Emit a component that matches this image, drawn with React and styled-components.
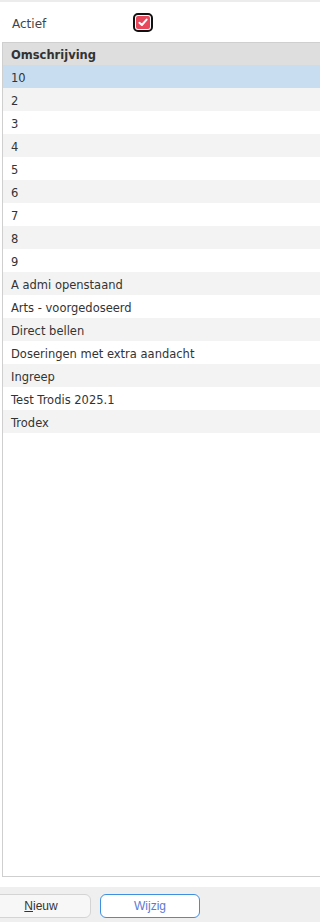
import React from "react";
import styled, { createGlobalStyle } from "styled-components";

const Global = createGlobalStyle`
  html, body { margin: 0; padding: 0; background: #fff; }
  body { overflow: hidden; font-family: "DejaVu Sans", Verdana, sans-serif; }
`;

const Page = styled.div`
  display: flex;
  flex-direction: column;
  height: 922px;
  width: 100%;
  overflow: hidden;
`;

const TopStrip = styled.div`
  height: 2px;
  background: #ececec;
  flex: none;
`;

const FilterRow = styled.div`
  display: grid;
  grid-template-columns: 121px auto;
  align-items: center;
  height: 40px;
  padding-left: 12px;
  flex: none;
`;

const Label = styled.span`
  font-size: 12px;
  color: #444;
  padding-top: 3px;
`;

const CheckBox = styled.span`
  box-sizing: border-box;
  width: 20px;
  height: 19px;
  border: 2px solid #111;
  border-radius: 5px;
  padding: 1px;
  display: inline-flex;
  margin-top: 1px;
`;

const CheckFill = styled.span`
  flex: 1;
  background: #e8485b;
  border-radius: 2px;
  display: flex;
  align-items: center;
  justify-content: center;
`;

const Table = styled.div`
  flex: 1;
  margin-left: 2px;
  border: 1px solid #cfcfcf;
  border-right: none;
  display: flex;
  flex-direction: column;
  min-height: 0;
`;

const HeaderCell = styled.div`
  height: 22px;
  box-sizing: border-box;
  background: #dedede;
  font-weight: bold;
  font-size: 11.5px;
  color: #333;
  display: flex;
  align-items: center;
  padding: 2px 0 0 8px;
`;

const Row = styled.div`
  height: 23px;
  box-sizing: border-box;
  display: flex;
  align-items: center;
  padding: 3px 0 0 8px;
  font-size: 11.5px;
  color: #333;
  background: ${(p) => (p.$selected ? "#c9ddf1" : p.$odd ? "#f3f3f3" : "#fff")};
`;

const Spacer = styled.div`
  height: 10px;
  flex: none;
`;

const Footer = styled.div`
  height: 35px;
  background: #efefef;
  display: flex;
  align-items: center;
  gap: 9px;
  padding-top: 2px;
  box-sizing: border-box;
  overflow: hidden;
  flex: none;
`;

const Button = styled.button`
  width: 100px;
  height: 24px;
  flex: none;
  box-sizing: border-box;
  border-radius: 6px;
  font-family: "Liberation Sans", Arial, sans-serif;
  font-size: 12px;
  padding: 0;
  background: ${(p) => (p.$primary ? "#fff" : "#f7f7f7")};
  border: 1px solid ${(p) => (p.$primary ? "#3d8fe0" : "#d4d4d4")};
  color: ${(p) => (p.$primary ? "#5b7bd5" : "#333")};
  &:first-child { margin-left: -9px; }
  u { text-decoration: underline; }
`;

const items = [
  "10", "2", "3", "4", "5", "6", "7", "8", "9",
  "A admi openstaand", "Arts - voorgedoseerd", "Direct bellen",
  "Doseringen met extra aandacht", "Ingreep", "Test Trodis 2025.1", "Trodex",
];

export default function App() {
  return (
    <Page>
      <Global />
      <TopStrip />
      <FilterRow>
        <Label>Actief</Label>
        <CheckBox>
          <CheckFill>
            <svg width="10" height="9" viewBox="0 0 10 9">
              <path d="M1.4 4.8 L3.9 7 L8.6 1.6" fill="none" stroke="#fff" strokeWidth="2" strokeLinecap="round" strokeLinejoin="round" />
            </svg>
          </CheckFill>
        </CheckBox>
      </FilterRow>
      <Table>
        <HeaderCell>Omschrijving</HeaderCell>
        {items.map((t, i) => (
          <Row key={t} $selected={i === 0} $odd={i % 2 === 1}>
            {t}
          </Row>
        ))}
      </Table>
      <Spacer />
      <Footer>
        <Button><u>N</u>ieuw</Button>
        <Button $primary>Wijzig</Button>
      </Footer>
    </Page>
  );
}
